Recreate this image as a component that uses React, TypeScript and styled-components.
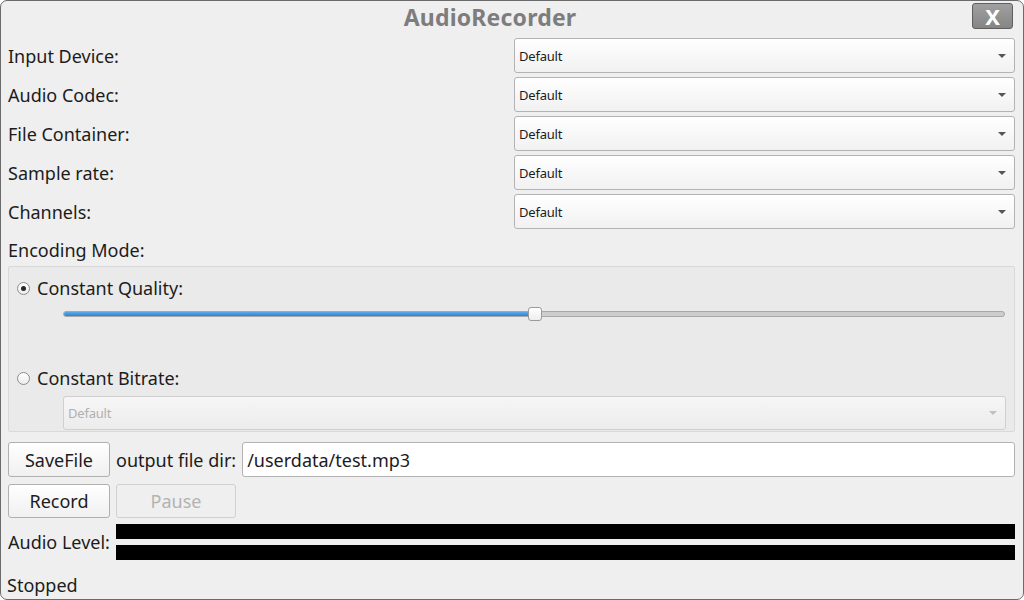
import React from "react";
import styled, { createGlobalStyle } from "styled-components";

const Global = createGlobalStyle`
  html, body { margin: 0; padding: 0; background: #ffffff; }
  * { box-sizing: border-box; }
  body { font-family: "Noto Sans", "DejaVu Sans", sans-serif; }
`;

const Window = styled.div`
  width: 1024px;
  height: 600px;
  border: 1px solid #6b6b6b;
  border-radius: 7px;
  background: #efefef;
  padding: 0 8px 0 7px;
  display: flex;
  flex-direction: column;
  overflow: hidden;
  color: #1c1c1c;
  font-size: 18px;
`;

const TitleBar = styled.div`
  height: 37px;
  display: flex;
  align-items: flex-start;
`;

const Title = styled.div`
  flex: 1;
  text-align: center;
  font-weight: 700;
  font-size: 23px;
  color: #7d7d7d;
  line-height: 33px;
  letter-spacing: 0.2px;
`;

const CloseButton = styled.button`
  margin-top: 2px;
  margin-right: 2px;
  width: 41px;
  height: 26px;
  border: 1px solid #5e5e5e;
  border-radius: 3px;
  background: linear-gradient(#a0a0a0, #858585);
  color: #fff;
  font-family: "Noto Sans", sans-serif;
  font-weight: 700;
  font-size: 22px;
  line-height: 22px;
  padding: 0;
`;

const FormGrid = styled.div`
  display: grid;
  grid-template-columns: 506px 1fr;
  grid-auto-rows: 35px;
  row-gap: 4px;
`;

const Label = styled.div`
  display: flex;
  align-items: center;
  white-space: nowrap;
`;

const ComboBox = styled.div<{ disabled?: boolean }>`
  position: relative;
  display: flex;
  align-items: center;
  height: 100%;
  padding-left: 4px;
  border: 1px solid ${(p) => (p.disabled ? "#cfcfcf" : "#b3b3b3")};
  border-radius: 3px;
  background: ${(p) =>
    p.disabled ? "linear-gradient(#f6f6f6, #ececec)" : "linear-gradient(#ffffff, #f1f1f1)"};
  color: ${(p) => (p.disabled ? "#b0b0b0" : "#1c1c1c")};
  font-size: 13px;
  letter-spacing: -0.2px;
  &::after {
    content: "";
    position: absolute;
    right: 8px;
    top: 50%;
    margin-top: -2px;
    border-left: 4px solid transparent;
    border-right: 4px solid transparent;
    border-top: 4px solid ${(p) => (p.disabled ? "#c0c0c0" : "#555")};
  }
`;

const SectionLabel = styled.div`
  height: 37px;
  display: flex;
  align-items: center;
  padding-top: 4px;
`;

const GroupBox = styled.div`
  height: 166px;
  border: 1px solid #d9d9d9;
  border-radius: 2px;
  background: #eaeaea;
  padding: 9px 8px 1px 8px;
  display: flex;
  flex-direction: column;
`;

const RadioRow = styled.label<{ gap: number }>`
  height: 24px;
  margin-top: ${(p) => p.gap}px;
  display: flex;
  align-items: center;
  gap: 7px;
`;

const Radio = styled.span<{ checked?: boolean }>`
  width: 13px;
  height: 13px;
  border-radius: 50%;
  border: 1px solid #8d8d8d;
  background: linear-gradient(#ffffff, #ececec);
  display: flex;
  align-items: center;
  justify-content: center;
  &::after {
    content: "";
    width: 5px;
    height: 5px;
    border-radius: 50%;
    background: ${(p) => (p.checked ? "#2a2a2a" : "transparent")};
  }
`;

const SliderTrack = styled.div`
  position: relative;
  height: 14px;
  margin: 7px 1px 0 46px;
  display: flex;
  align-items: center;
`;

const Groove = styled.div`
  width: 100%;
  height: 6px;
  border: 1px solid #a8a8a8;
  border-radius: 3px;
  background: #cdcdcd;
  overflow: hidden;
`;

const GrooveFill = styled.div`
  height: 100%;
  background: linear-gradient(#5aa9ea, #2f84cf);
  border-right: 1px solid #1f5f99;
`;

const Handle = styled.div`
  position: absolute;
  top: 0;
  width: 14px;
  height: 14px;
  border: 1px solid #9a9a9a;
  border-radius: 3px;
  background: linear-gradient(#ffffff, #ededed);
`;

const IndentedCombo = styled.div`
  height: 34px;
  margin: 6px 0 0 46px;
`;

const ButtonRow = styled.div<{ top: number; h: number }>`
  height: ${(p) => p.h}px;
  margin-top: ${(p) => p.top}px;
  display: flex;
  align-items: center;
  gap: 6px;
`;

const PushButton = styled.button<{ w: number }>`
  width: ${(p) => p.w}px;
  height: 100%;
  border: 1px solid ${(p) => (p.disabled ? "#d0d0d0" : "#b0b0b0")};
  border-radius: 3px;
  background: ${(p) =>
    p.disabled ? "#efefef" : "linear-gradient(#ffffff, #f0f0f0)"};
  color: ${(p) => (p.disabled ? "#b3b3b3" : "#1c1c1c")};
  font-family: "Noto Sans", sans-serif;
  font-size: 18px;
  padding: 0;
`;

const LineEdit = styled.div`
  flex: 1;
  height: 100%;
  border: 1px solid #b3b3b3;
  border-radius: 3px;
  background: #ffffff;
  display: flex;
  align-items: center;
  padding-left: 4px;
`;

const LevelRow = styled.div`
  margin-top: 6px;
  height: 36px;
  display: grid;
  grid-template-columns: 108px 1fr;
`;

const Bars = styled.div`
  display: flex;
  flex-direction: column;
  justify-content: space-between;
`;

const Bar = styled.div`
  height: 15px;
  background: #000;
`;

const Status = styled.div`
  margin-top: 12px;
  margin-left: -1px;
  height: 26px;
  display: flex;
  align-items: center;
`;

const fields = ["Input Device:", "Audio Codec:", "File Container:", "Sample rate:", "Channels:"];

export default function App() {
  const quality = 0.5;
  return (
    <>
      <Global />
      <Window>
        <TitleBar>
          <Title>AudioRecorder</Title>
          <CloseButton>X</CloseButton>
        </TitleBar>
        <FormGrid>
          {fields.map((f) => (
            <React.Fragment key={f}>
              <Label>{f}</Label>
              <ComboBox>Default</ComboBox>
            </React.Fragment>
          ))}
        </FormGrid>
        <SectionLabel>Encoding Mode:</SectionLabel>
        <GroupBox>
          <RadioRow gap={0}>
            <Radio checked />
            Constant Quality:
          </RadioRow>
          <SliderTrack>
            <Groove>
              <GrooveFill style={{ width: `${quality * 100}%` }} />
            </Groove>
            <Handle style={{ left: `calc(${quality * 100}% - 6px)` }} />
          </SliderTrack>
          <RadioRow gap={45}>
            <Radio />
            Constant Bitrate:
          </RadioRow>
          <IndentedCombo>
            <ComboBox disabled>Default</ComboBox>
          </IndentedCombo>
        </GroupBox>
        <ButtonRow top={10} h={35}>
          <PushButton w={102}>SaveFile</PushButton>
          <Label>output file dir:</Label>
          <LineEdit>/userdata/test.mp3</LineEdit>
        </ButtonRow>
        <ButtonRow top={7} h={34}>
          <PushButton w={102}>Record</PushButton>
          <PushButton w={120} disabled>
            Pause
          </PushButton>
        </ButtonRow>
        <LevelRow>
          <Label>Audio Level:</Label>
          <Bars>
            <Bar />
            <Bar />
          </Bars>
        </LevelRow>
        <Status>Stopped</Status>
      </Window>
    </>
  );
}
